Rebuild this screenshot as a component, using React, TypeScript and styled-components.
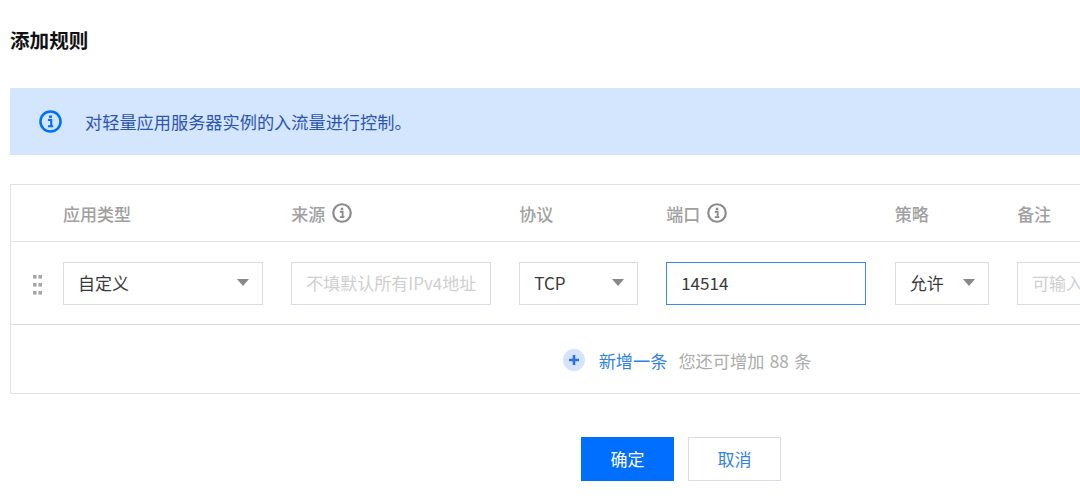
import React from "react";
import styled, { createGlobalStyle } from "styled-components";

const GlobalStyle = createGlobalStyle`
    html, body {
        margin: 0;
        padding: 0;
        background: #fff;
        overflow: hidden;
    }
    body {
        font-family: "Noto Sans CJK SC", "Noto Sans", sans-serif;
    }
`;

const Page = styled.div`
    width: 1080px;
    height: 499px;
    padding: 26px 0 0 10px;
    box-sizing: border-box;
    overflow: hidden;
`;

const Title = styled.h2`
    margin: 0;
    height: 27px;
    line-height: 27px;
    font-size: 19.6px;
    font-weight: 700;
    color: #111;
`;

const Banner = styled.div`
    margin-top: 35px;
    height: 67px;
    display: flex;
    align-items: center;
    gap: 23px;
    padding-left: 29px;
    background: #d4e5fe;
    color: #2b55b5;
    font-size: 17.2px;
`;

const RuleTable = styled.div`
    margin-top: 29px;
    width: 1354px;
    border: 1px solid #e0e2e8;
    box-sizing: border-box;
`;

const columns = "199.8px 199.6px 118.6px 200.2px 94px 200px";

const HeadRow = styled.div`
    display: grid;
    grid-template-columns: ${columns};
    column-gap: 28.4px;
    align-items: center;
    height: 56px;
    padding-left: 52px;
    border-bottom: 1px solid #e0e2e8;
    color: #a0a0a0;
    font-size: 17px;
    font-weight: 500;
`;

const HeadCell = styled.div`
    display: flex;
    align-items: center;
    gap: 7px;
`;

const BodyRow = styled.div`
    position: relative;
    display: grid;
    grid-template-columns: ${columns};
    column-gap: 28.4px;
    align-items: center;
    height: 83px;
    padding-left: 52px;
    border-bottom: 1px solid #d8dce6;
    box-sizing: border-box;
`;

const DragHandle = styled.svg`
    position: absolute;
    left: 22px;
    top: 33px;
`;

const Field = styled.div<{ $active?: boolean }>`
    height: 43px;
    box-sizing: border-box;
    display: flex;
    align-items: center;
    justify-content: space-between;
    padding: 0 14px 2px 14px;
    background: #fff;
    border: 1px solid ${(p) => (p.$active ? "#3f87f0" : "#d8dce6")};
    color: #3a3a3a;
    font-size: 17px;
`;

const Placeholder = styled.span`
    color: #cfcfcf;
    white-space: nowrap;
    overflow: hidden;
`;

const Caret = styled.span`
    width: 0;
    height: 0;
    margin-right: -1px;
    border-left: 6px solid transparent;
    border-right: 6px solid transparent;
    border-top: 7px solid #888;
`;

const AddRow = styled.div`
    height: 68px;
    padding-top: 2px;
    box-sizing: border-box;
    display: flex;
    align-items: center;
    justify-content: center;
    font-size: 17.2px;
`;

const AddIcon = styled.svg`
    margin-right: 14px;
`;

const AddLink = styled.span`
    color: #2f80ed;
    margin-right: 11px;
`;

const AddHint = styled.span`
    color: #ababab;
    word-spacing: 1.5px;
`;

const Actions = styled.div`
    margin-top: 43px;
    padding-left: 571px;
    display: flex;
    gap: 14px;
`;

const Button = styled.button<{ $primary?: boolean }>`
    width: 93px;
    height: 44px;
    padding: 0 0 2px;
    box-sizing: border-box;
    font-family: inherit;
    font-size: 17px;
    border: 1px solid ${(p) => (p.$primary ? "#006eff" : "#d8dce6")};
    background: ${(p) => (p.$primary ? "#006eff" : "#fff")};
    color: ${(p) => (p.$primary ? "#fff" : "#2f80ed")};
`;

const InfoIcon = ({ size, color }: { size: number; color: string }) => (
    <svg width={size} height={size} viewBox="0 0 22 22" fill="none">
        <circle cx="11" cy="11" r="9.6" stroke={color} strokeWidth="2.4" />
        <rect x="9.7" y="5.2" width="2.6" height="2.6" fill={color} />
        <path d="M8.6 9.6h3.1v5.6M8.6 15.6h5" stroke={color} strokeWidth="2" />
    </svg>
);

const App: React.FC = () => {
    return (
        <Page>
            <GlobalStyle />
            <Title>添加规则</Title>
            <Banner>
                <InfoIcon size={23} color="#006eff" />
                <span>对轻量应用服务器实例的入流量进行控制。</span>
            </Banner>
            <RuleTable>
                <HeadRow>
                    <HeadCell>应用类型</HeadCell>
                    <HeadCell>
                        来源 <InfoIcon size={20} color="#8a8a8a" />
                    </HeadCell>
                    <HeadCell>协议</HeadCell>
                    <HeadCell>
                        端口 <InfoIcon size={20} color="#8a8a8a" />
                    </HeadCell>
                    <HeadCell>策略</HeadCell>
                    <HeadCell>备注</HeadCell>
                </HeadRow>
                <BodyRow>
                    <DragHandle width="10" height="20" viewBox="0 0 10 20" fill="#a8a8a8">
                        <rect x="0" y="0" width="3.6" height="3.6" />
                        <rect x="5.4" y="0" width="3.6" height="3.6" />
                        <rect x="0" y="8" width="3.6" height="3.6" />
                        <rect x="5.4" y="8" width="3.6" height="3.6" />
                        <rect x="0" y="16" width="3.6" height="3.6" />
                        <rect x="5.4" y="16" width="3.6" height="3.6" />
                    </DragHandle>
                    <Field>
                        自定义
                        <Caret />
                    </Field>
                    <Field>
                        <Placeholder>不填默认所有IPv4地址</Placeholder>
                    </Field>
                    <Field>
                        TCP
                        <Caret />
                    </Field>
                    <Field $active>14514</Field>
                    <Field>
                        允许
                        <Caret />
                    </Field>
                    <Field>
                        <Placeholder>可输入备注</Placeholder>
                    </Field>
                </BodyRow>
                <AddRow>
                    <AddIcon width="22" height="22" viewBox="0 0 22 22">
                        <circle cx="11" cy="11" r="11" fill="#d5e4fb" />
                        <path d="M11 6v10M6 11h10" stroke="#2a6ff0" strokeWidth="2.6" />
                    </AddIcon>
                    <AddLink>新增一条</AddLink>
                    <AddHint>您还可增加 88 条</AddHint>
                </AddRow>
            </RuleTable>
            <Actions>
                <Button $primary>确定</Button>
                <Button>取消</Button>
            </Actions>
        </Page>
    );
};

export default App;
